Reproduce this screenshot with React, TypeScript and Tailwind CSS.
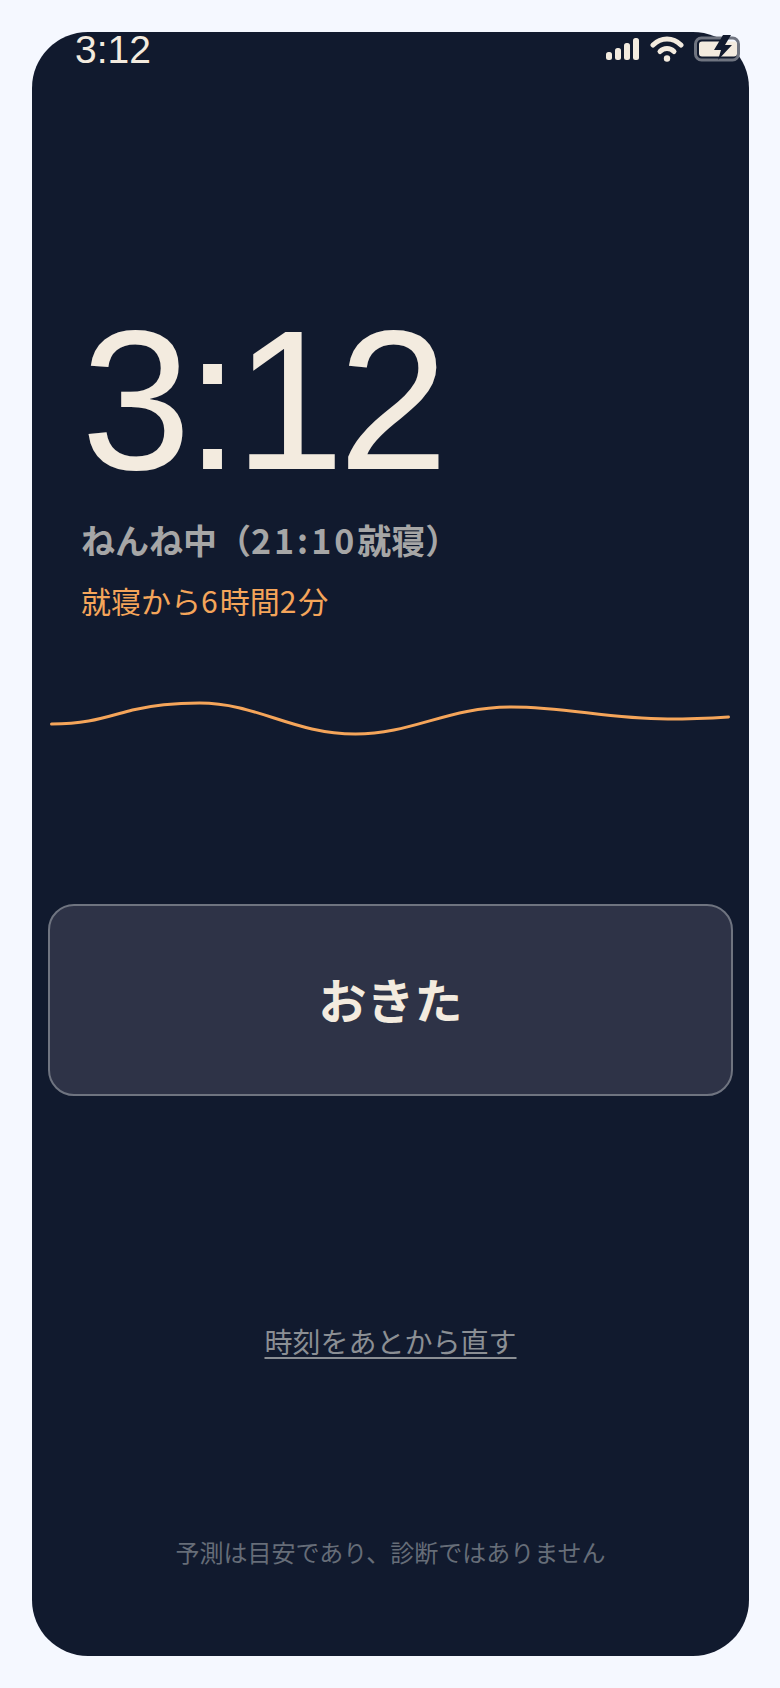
import React from "react";

const jp = "font-['Noto_Sans_CJK_JP','Liberation_Sans',sans-serif]";

function StatusIcons() {
  return (
    <div className="flex items-center gap-[10px]">
      <svg width="34" height="24" viewBox="0 0 34 24" fill="#f3ebdf">
        <rect x="0" y="15" width="6" height="8" rx="2.5" />
        <rect x="9" y="11" width="6" height="12" rx="2.5" />
        <rect x="18" y="6" width="6" height="17" rx="2.5" />
        <rect x="27" y="1" width="6" height="22" rx="2.5" />
      </svg>
      <svg width="34" height="28" viewBox="0 0 34 28" fill="none" stroke="#f3ebdf" strokeWidth="5" strokeLinecap="round">
        <path d="M3 10 C11 2 23 2 31 10" />
        <path d="M10 16.5 C14 12.5 20 12.5 24 16.5" />
        <circle cx="17" cy="23.5" r="3.2" fill="#f3ebdf" stroke="none" />
      </svg>
      <svg width="48" height="26" viewBox="0 0 48 26" fill="none" className="overflow-visible">
        <rect x="1.5" y="2" width="43" height="22" rx="6" stroke="#6f7480" strokeWidth="3" />
        <rect x="5" y="5.5" width="38" height="15" rx="3" fill="#f3ebdf" />
        <path d="M29 -1 L20 14 H27 L24 24 L38 9 H31 L37 -1 Z" fill="#111a2e" />
      </svg>
    </div>
  );
}

export default function App() {
  return (
    <div className={`min-h-[1688px] bg-[#f5f8ff] pt-8 pl-8 pr-[31px] pb-8 ${jp}`}>
      <div className="flex h-[1624px] flex-col rounded-[56px] bg-[#111a2e]">
        <div className="flex h-[38px] items-start justify-between pl-[43px] pr-[7px]">
          <span className="font-['Liberation_Sans',sans-serif] text-[39px] leading-[36px] text-[#f3ebdf]">3:12</span>
          <div className="pt-[3px]">
            <StatusIcons />
          </div>
        </div>

        <div className="mt-[236px] px-[49px]">
          <div className="font-['Liberation_Sans',sans-serif] text-[198px] leading-[190px] tracking-[-6px] text-[#f3ebdf]">3:12</div>
          <div className="mt-[24px] text-[34px] leading-[40px] font-bold text-[#a6a6a6]">
            ねんね中（<span className="tracking-[3px]">21:10</span>就寝）
          </div>
          <div className="mt-[20px] text-[30px] leading-[40px] text-[#f5a55a]">
            就寝から<span className="tracking-[2px]">6</span>時間<span className="tracking-[2px]">2</span>分
          </div>
        </div>

        <svg className="mt-[70px] block w-full" height="60" viewBox="0 0 716 60" fill="none">
          <path
            d="M19 34 C55 34 70 28 100 20 C125 14 145 13 167 13 C225 13 260 44 323 44 C380 44 415 17 479 17 C535 17 575 29 635 29 C660 29 680 28 696 27"
            stroke="#f5a55a"
            strokeWidth="3"
            strokeLinecap="round"
          />
        </svg>

        <div className="mt-[154px] px-4">
          <button className="flex h-[192px] w-full items-center justify-center rounded-[26px] border-2 border-[#6f7480] bg-[#2e3347] pb-1 text-[48px] font-bold text-[#f3ebdf]">
            おきた
          </button>
        </div>

        <div className="mt-[225px] text-center">
          <a className="text-[28px] leading-[40px] text-[#8b8f94] underline decoration-2 underline-offset-4">時刻をあとから直す</a>
        </div>

        <div className="mt-[173px] text-center text-[24px] leading-[36px] text-[#666d78]">
          予測は目安であり、診断ではありません
        </div>
      </div>
    </div>
  );
}
